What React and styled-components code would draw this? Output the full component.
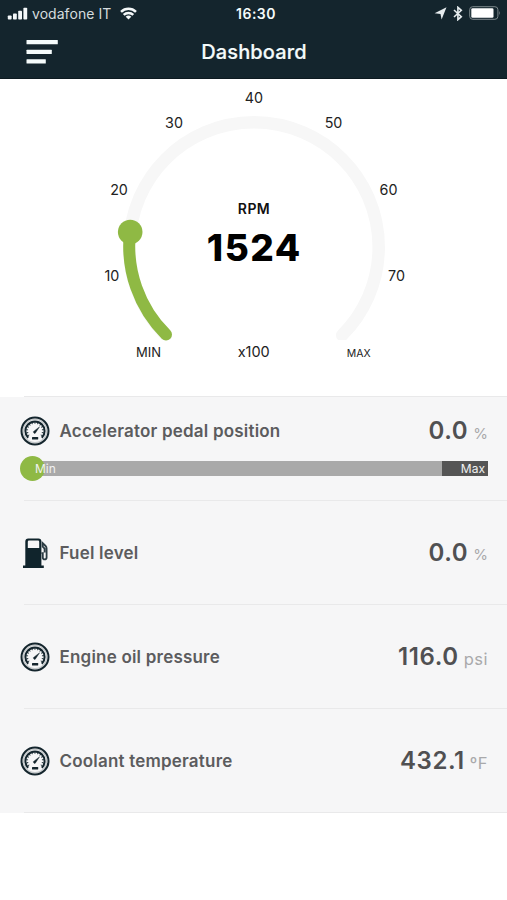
import React, { Component } from 'react';
import styled, { createGlobalStyle } from 'styled-components';

const marks = [
  { label: 'MIN', x: 148.5, y: 278, size: 13 },
  { label: '10', x: 111.8, y: 202 },
  { label: '20', x: 119, y: 116 },
  { label: '30', x: 174, y: 49 },
  { label: '40', x: 254, y: 24 },
  { label: '50', x: 333.5, y: 49 },
  { label: '60', x: 388.5, y: 116 },
  { label: '70', x: 396.5, y: 202 },
  { label: 'MAX', x: 358.8, y: 278, size: 10.5 },
  { label: 'x100', x: 253.7, y: 278, size: 14.5 },
];

const readings = [
  { name: 'Accelerator pedal position', value: '0.0', unit: '%', icon: 'gauge', slider: true },
  { name: 'Fuel level', value: '0.0', unit: '%', icon: 'fuel' },
  { name: 'Engine oil pressure', value: '116.0', unit: 'psi', icon: 'gauge' },
  { name: 'Coolant temperature', value: '432.1', unit: 'ºF', icon: 'gauge' },
];

const SignalIcon = () => (
  <svg width="21" height="13" viewBox="0 0 21 13" fill="#f4f8f9">
    <rect x="0.8" y="8.5" width="3.8" height="4" rx="0.8" />
    <rect x="6" y="6.5" width="3.8" height="6" rx="0.8" />
    <rect x="11.2" y="3.8" width="3.8" height="8.7" rx="0.8" />
    <rect x="16.4" y="0.8" width="3.8" height="11.7" rx="0.8" />
  </svg>
);

const WifiIcon = () => (
  <svg width="17" height="13" viewBox="0 0 17 13" fill="none" stroke="#f4f8f9" strokeWidth="2.5">
    <path d="M1 4.9 A10.8 10.8 0 0 1 16 4.9" />
    <path d="M3.7 7.9 A6.9 6.9 0 0 1 13.3 7.9" />
    <path d="M8.5 12.6 L5.7 9.8 A3.9 3.9 0 0 1 11.3 9.8 Z" fill="#f4f8f9" stroke="none" />
  </svg>
);

const LocationIcon = () => (
  <svg width="13" height="13" viewBox="0 0 13 13" fill="#e6ecee">
    <path d="M12.5 0.3 L7.6 12.4 L6.5 6.9 L0.6 6.2 Z" />
  </svg>
);

const BluetoothIcon = () => (
  <svg width="10" height="15" viewBox="0 0 10 15" fill="none" stroke="#e6ecee" strokeWidth="1.6">
    <path d="M1 4 L8.3 10.7 L4.9 13.7 V1.3 L8.3 4.3 L1 11" />
  </svg>
);

const BatteryIcon = () => (
  <svg width="32" height="14" viewBox="0 0 32 14">
    <rect x="0.7" y="0.7" width="28.2" height="12.6" rx="3" fill="none" stroke="#7d888c" />
    <rect x="2.3" y="2.3" width="22.2" height="9.4" rx="1.3" fill="#fff" />
    <path d="M30 4.8 Q31.6 7 30 9.2 Z" fill="#7d888c" />
  </svg>
);

const MenuIcon = () => (
  <svg width="32" height="26" viewBox="0 0 32 26" fill="#f5fbfb">
    <rect x="0.5" y="1" width="31.3" height="4.2" rx="0.5" />
    <rect x="0.5" y="10.7" width="25.3" height="4.2" rx="0.5" />
    <rect x="0.5" y="20.3" width="19.3" height="4.2" rx="0.5" />
  </svg>
);

const GaugeIcon = () => (
  <svg width="30" height="30" viewBox="0 0 30 30" fill="none" stroke="#14252d">
    <circle cx="15" cy="15" r="13.5" strokeWidth="2" />
    <circle cx="15" cy="15" r="11.6" strokeWidth="1.2" strokeOpacity="0.22" />
    <path d="M8.2 21.8 A9.6 9.6 0 1 1 21.8 21.8" strokeWidth="2" />
    <path d="M8.8 19.6 A7.9 7.9 0 1 1 21.2 19.6" strokeWidth="1.8" strokeDasharray="0.9 1.9" />
    <path d="M19.6 10.8 L15.8 16.4 A1.2 1.2 0 1 1 14.2 14.9 Z" fill="#14252d" strokeWidth="0.4" />
    <rect x="12" y="21" width="6.2" height="2.4" rx="0.5" fill="#14252d" stroke="none" />
  </svg>
);

const FuelIcon = () => (
  <svg width="30" height="32" viewBox="0 0 30 32">
    <path
      d="M5.3 28.6 V4.4 Q5.3 1.4 8.3 1.4 H18.4 Q21.4 1.4 21.4 4.4 V28.6 H23.8 V30.9 H3 V28.6 Z M7.8 4.8 V10.9 H19.2 V4.8 Q19.2 3.5 18 3.5 H9 Q7.8 3.5 7.8 4.8 Z"
      fill="#10242c"
      fillRule="evenodd"
    />
    <path
      d="M21.4 16.2 H22.8 V20.4 Q22.8 22.3 24.7 22.3 Q26.6 22.3 26.6 20.4 V11.6 Q26.6 10 25.6 9 L22.7 6.2 V9.6 L24.6 11.6 V15.4"
      fill="none"
      stroke="#2b3c44"
      strokeWidth="1.8"
    />
  </svg>
);

class App extends Component {

  renderMarks = () => marks.map(({ label, x, y, size }) => (
    <Mark key={label} x={x} y={y} $size={size}>{label}</Mark>
  ));

  renderGauge = () => (
    <Gauge width="507" height="317" viewBox="0 0 507 317">
      <clipPath id="dial">
        <rect x="0" y="0" width="507" height="261" />
      </clipPath>
      <g fill="none" strokeWidth="12.5" strokeLinecap="round">
        <path d="M165.8 256.2 A124.7 124.7 0 1 1 342.2 256.2" stroke="#f7f7f7" clipPath="url(#dial)" />
        <path d="M166 255.5 A124.7 124.7 0 0 1 130 153" stroke="#8fb944" strokeWidth="12" />
      </g>
      <circle cx="130.2" cy="153" r="12.3" fill="#8fb944" />
      {this.renderMarks()}
      <Caption x="254" y="134.5">RPM</Caption>
      <Reading x="254.3" y="182">1524</Reading>
    </Gauge>
  );

  renderReadings = () => readings.map(({ name, value, unit, icon, slider }) => (
    <Row key={name}>
      <RowHead $slider={slider}>
        <IconBox>{icon === 'fuel' ? <FuelIcon /> : <GaugeIcon />}</IconBox>
        <Name>{name}</Name>
        <Value>{value}</Value>
        <Unit $percent={unit === '%'}>{unit}</Unit>
      </RowHead>
      {slider && (
        <Slider>
          <Knob />
          <MinLabel>Min</MinLabel>
          <MaxLabel>Max</MaxLabel>
        </Slider>
      )}
    </Row>
  ));

  render() {
    return (
      <Wrapper>
        <GlobalStyle />
        <Header>
          <StatusBar>
            <StatusSide>
              <SignalIcon />
              <Carrier>vodafone IT</Carrier>
              <WifiIcon />
            </StatusSide>
            <Time>16:30</Time>
            <StatusSide $end>
              <LocationIcon />
              <BluetoothIcon />
              <BatteryIcon />
            </StatusSide>
          </StatusBar>
          <NavBar>
            <MenuIcon />
            <Title>Dashboard</Title>
          </NavBar>
        </Header>
        {this.renderGauge()}
        <Divider />
        <List>
          {this.renderReadings()}
        </List>
      </Wrapper>
    );
  }
}

const GlobalStyle = createGlobalStyle`
  body {
    margin: 0;
    background: #fff;
  }
`;

const Wrapper = styled.div`
  width: 507px;
  height: 900px;
  overflow: hidden;
  background: #fff;
  font-family: Inter, Roboto, sans-serif;
`;

const Header = styled.header`
  height: 79px;
  box-sizing: border-box;
  background: #14252d;
  border-bottom: 1px solid #0d1a20;
  color: #f5fbfb;
`;

const StatusBar = styled.div`
  display: grid;
  grid-template-columns: 1fr auto 1fr;
  align-items: center;
  height: 26px;
  padding: 0 6px 0 7px;
`;

const StatusSide = styled.div`
  display: flex;
  align-items: center;
  justify-content: ${({ $end }) => $end ? 'flex-end' : 'flex-start'};
  gap: ${({ $end }) => $end ? 6 : 0}px;
`;

const Carrier = styled.span`
  width: 80px;
  margin: 1px 8px 0 4px;
  font-size: 14px;
  letter-spacing: 0.05px;
  color: #d5dcde;
  white-space: nowrap;
`;

const Time = styled.span`
  margin: 1px 0 0 4px;
  font-size: 14px;
  font-weight: 600;
  letter-spacing: 0.5px;
`;

const NavBar = styled.div`
  display: grid;
  grid-template-columns: 1fr auto 1fr;
  align-items: center;
  height: 52px;
  padding: 0 26px;
`;

const Title = styled.h1`
  margin: 0 0 0 1px;
  font-size: 20px;
  font-weight: 500;
  letter-spacing: 0.15px;
  -webkit-text-stroke: 0.2px #f5fbfb;
`;

const Gauge = styled.svg`
  display: block;
`;

const Mark = styled.text`
  fill: #222;
  font-size: ${({ $size }) => $size || 14.3}px;
  text-anchor: middle;
`;

const Caption = styled.text`
  fill: #111;
  font-size: 14px;
  font-weight: 600;
  letter-spacing: 0.4px;
  text-anchor: middle;
`;

const Reading = styled.text`
  fill: #000;
  font-size: 37px;
  font-weight: 800;
  letter-spacing: 1.5px;
  text-anchor: middle;
`;

const Divider = styled.div`
  height: 1px;
  margin-left: 24px;
  background: #e9e9ea;
`;

const List = styled.div`
  height: 416px;
  background: #f6f6f7;
`;

const Row = styled.div`
  height: 104px;
  box-sizing: border-box;
  padding: 0 19px 0 20px;
  background: linear-gradient(#e9e9ea, #e9e9ea) 24px 103px / 100% 1px no-repeat;
`;

const RowHead = styled.div`
  display: flex;
  align-items: center;
  height: ${({ $slider }) => $slider ? 68 : 103}px;
`;

const IconBox = styled.div`
  display: flex;
  width: 30px;
  margin-right: 9.5px;
`;

const Name = styled.span`
  flex: 1;
  font-size: 17px;
  font-weight: 600;
  letter-spacing: 0.2px;
  color: #5c5c5e;
`;

const Value = styled.span`
  margin-top: -1px;
  font-size: 24px;
  font-weight: 600;
  letter-spacing: 0.6px;
  color: #505052;
`;

const Unit = styled.span`
  margin: 4px 0 0 5px;
  font-size: ${({ $percent }) => $percent ? 15 : 16.5}px;
  letter-spacing: ${({ $percent }) => $percent ? 0 : 0.5}px;
  color: #a9a9ab;
`;

const Slider = styled.div`
  position: relative;
  display: flex;
  justify-content: space-between;
  height: 15px;
  margin-top: -4px;
  margin-left: 8px;
  background: #a9a9a9;
  font-size: 12px;
  line-height: 15px;
  color: #f1f1f1;
`;

const Knob = styled.div`
  position: absolute;
  top: -5px;
  left: -8px;
  width: 25px;
  height: 25px;
  border-radius: 50%;
  background: #8fb944;
`;

const MinLabel = styled.span`
  position: relative;
  margin-left: 7px;
`;

const MaxLabel = styled.span`
  width: 46px;
  box-sizing: border-box;
  padding-right: 3px;
  text-align: right;
  background: #555;
`;

export default App;
